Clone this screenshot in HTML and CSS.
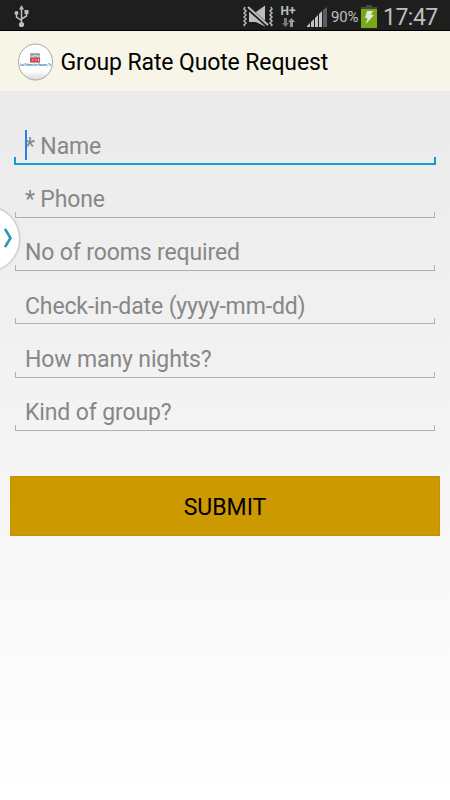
FILE: index.html
```html
<!DOCTYPE html>
<html lang="en">
<head>
  <meta charset="UTF-8" />
  <meta name="viewport" content="width=device-width, initial-scale=1" />
  <title>Group Rate Quote Request</title>
  <link rel="stylesheet" href="styles.css">
</head>
<body>

  <!-- Status bar -->
  <div class="status-bar">
    <svg class="icon-usb" width="16" height="24" viewBox="0 0 16 24" fill="none" stroke="#bebebe" stroke-width="1.5">
      <path d="M7.500 4v15M2.500 10v3l5 3.500M12.500 9v3L7.500 15" />
      <path d="M7.500 1L10 5.500H5zM10.500 6h4v4h-4z" fill="#bebebe" stroke="none" />
      <circle cx="2.500" cy="9" r="2" fill="#bebebe" stroke="none" />
      <circle cx="7.500" cy="20.500" r="2.600" fill="#bebebe" stroke="none" />
    </svg>

    <svg class="icon-mute" width="30" height="24" viewBox="0 0 30 24" fill="none" stroke="#bebebe">
      <path d="M6 7h7l9-6.500v21L13 17H6z" fill="#bebebe" stroke="none" />
      <path d="M5 3l20 18" stroke="#1e1e1e" stroke-width="4" />
      <path d="M5 2l20 18" stroke-width="2" />
      <path d="M2 2l-1 2 2 2-2 2 2 2-2 2 2 2-2 2 2 2-2 2 1 1M28 2l1 2-2 2 2 2-2 2 2 2-2 2 2 2-2 2 2 2-1 1" stroke-width="1.500" />
    </svg>

    <div class="network">
      <span>H+</span>
      <svg width="13" height="10" viewBox="0 0 13 10">
        <path d="M2 0h3v5h2L3.500 9 0 5h2z" fill="#777" />
        <path d="M8 9h3V4h2L9.500 0 6 4h2z" fill="#999" />
      </svg>
    </div>

    <svg class="icon-signal" width="20" height="20" viewBox="0 0 20 20">
      <path d="M0 20v-1l3-3v4zM4 20v-5l3-3v8zM8 20v-9l3-3v12zM12 20V7l3-3v16z" fill="#c4c4c4" />
      <path d="M16 20V3l4-3v20z" fill="#5d5d5d" />
    </svg>

    <span class="battery-level">90%</span>

    <svg class="icon-battery" width="16" height="23" viewBox="0 0 16 23">
      <path d="M5 0h6v2h5v21H0V2h5z" fill="#454a42" />
      <path d="M0 4h16v19H0z" fill="#78a815" />
      <path d="M6 6h6l-2 4h3L5 19l1.500-6H4z" fill="#e2e5dc" />
    </svg>

    <span class="clock">17:47</span>
  </div>

  <!-- Title bar -->
  <header>
    <svg class="logo" width="36" height="38" viewBox="0 0 36 38">
      <defs>
        <linearGradient id="shine" x1="0" y1="0" x2="0" y2="1">
          <stop offset="0.750" stop-color="#fff" />
          <stop offset="1" stop-color="#d8d8de" />
        </linearGradient>
      </defs>
      <ellipse cx="17.500" cy="19" rx="17" ry="18" fill="url(#shine)" stroke="#aaa9a5" />
      <path d="M12 10.500h10v9H12z" fill="#9fb9cb" />
      <path d="M12 14.500h10v5H12z" fill="#d84a52" />
      <path d="M13.500 14.500l3-2 5 1M14 17h1.500M17.500 17H19M20.500 16v2" stroke="#f4e6e6" stroke-width="0.700" fill="none" />
      <path d="M12.500 11h9" stroke="#5a7285" stroke-width="0.800" />
      <text x="17.500" y="22.800" text-anchor="middle" textLength="31" lengthAdjust="spacingAndGlyphs">Las Palmas Inn Houston, Tx</text>
    </svg>
    <h1>Group Rate Quote Request</h1>
  </header>

  <!-- Quote form -->
  <main>
    <form>
      <div class="field focused"><span class="hint">* Name</span><span class="cursor"></span></div>
      <div class="field"><span class="hint">* Phone</span></div>
      <div class="field"><span class="hint">No of rooms required</span></div>
      <div class="field"><span class="hint">Check-in-date (yyyy-mm-dd)</span></div>
      <div class="field"><span class="hint">How many nights?</span></div>
      <div class="field"><span class="hint">Kind of group?</span></div>
      <button type="button" class="submit">SUBMIT</button>
    </form>
  </main>

  <!-- Edge handle -->
  <div class="handle">
    <svg width="9" height="20" viewBox="0 0 9 20" fill="none" stroke="#2b93b8" stroke-width="2.500">
      <path d="M1 1l5.500 9L1 19" />
    </svg>
  </div>

</body>
</html>
```

FILE: styles.css
```css
* {
  box-sizing: border-box;
}

body {
  font-family: Roboto, sans-serif;
  margin: 0;
  height: 800px;
  display: flex;
  flex-direction: column;
  position: relative;
  overflow: hidden;
  color: #000;
}

/* Status bar */
.status-bar {
  height: 31px;
  flex: none;
  display: flex;
  align-items: flex-start;
  padding-left: 14px;
  background: #1e1e1e;
  border-bottom: 1px solid #000;
  color: #bebebe;
}

.icon-usb {
  margin-top: 4px;
}

.icon-mute {
  margin: 5px 0 0 213px;
}

.network {
  width: 16px;
  margin: 5px 0 0 7px;
  display: flex;
  flex-direction: column;
  align-items: center;
  font-size: 12px;
  line-height: 13px;
  font-weight: 700;
}

.icon-signal {
  margin: 7px 0 0 11px;
}

.battery-level {
  width: 29px;
  margin-left: 4px;
  font-size: 15px;
  line-height: 34px;
  letter-spacing: -0.2px;
}

.icon-battery {
  margin: 5px 0 0 1px;
}

.clock {
  margin-left: 6px;
  font-size: 23px;
  line-height: 35px;
  letter-spacing: -0.5px;
}

/* Title bar */
header {
  height: 60px;
  flex: none;
  display: flex;
  align-items: center;
  padding: 2px 0 0 18px;
  background: #f7f5e7;
}

.logo {
  overflow: visible;
}

.logo text {
  font-size: 3px;
  font-weight: 700;
  fill: #1d78a8;
}

h1 {
  margin: 0 0 0 6.5px;
  font-size: 23px;
  font-weight: 400;
  letter-spacing: -0.12px;
  white-space: nowrap;
}

/* Form */
main {
  flex: 1;
  padding: 20px 10px 0;
  background: linear-gradient(#eaeaea, #fff);
}

form {
  display: flex;
  flex-direction: column;
}

.field {
  height: 53.33px;
  margin: 0 5px;
  display: flex;
  align-items: flex-end;
  position: relative;
  padding: 0 10px 4.5px;
  font-size: 23px;
  line-height: 27px;
  letter-spacing: -0.13px;
  color: #878787;
}

.field::after {
  content: "";
  position: absolute;
  left: 0;
  right: 0;
  bottom: 0;
  height: 5px;
  border: 1px solid #b0b0b0;
  border-top: none;
}

.field.focused::after {
  left: -1px;
  right: -1px;
  bottom: -1px;
  height: 6px;
  border-width: 2px;
  border-color: #159fd0;
}

.cursor {
  position: absolute;
  left: 10px;
  bottom: 4px;
  width: 1.5px;
  height: 30px;
  background: #2484ea;
}

.submit {
  height: 60px;
  margin-top: 45px;
  padding: 4px 0 0;
  border: 1px solid #c49200;
  background: #cc9900;
  color: #000;
  font-family: inherit;
  font-size: 23px;
}

/* Edge handle */
.handle {
  position: absolute;
  left: -46px;
  top: 206px;
  width: 66px;
  height: 66px;
  border: 1px solid #ccc;
  border-radius: 50%;
  background: #fff;
  box-shadow: 0 0 2px #bbb;
}

.handle svg {
  position: absolute;
  left: 49px;
  top: 21px;
}
```
